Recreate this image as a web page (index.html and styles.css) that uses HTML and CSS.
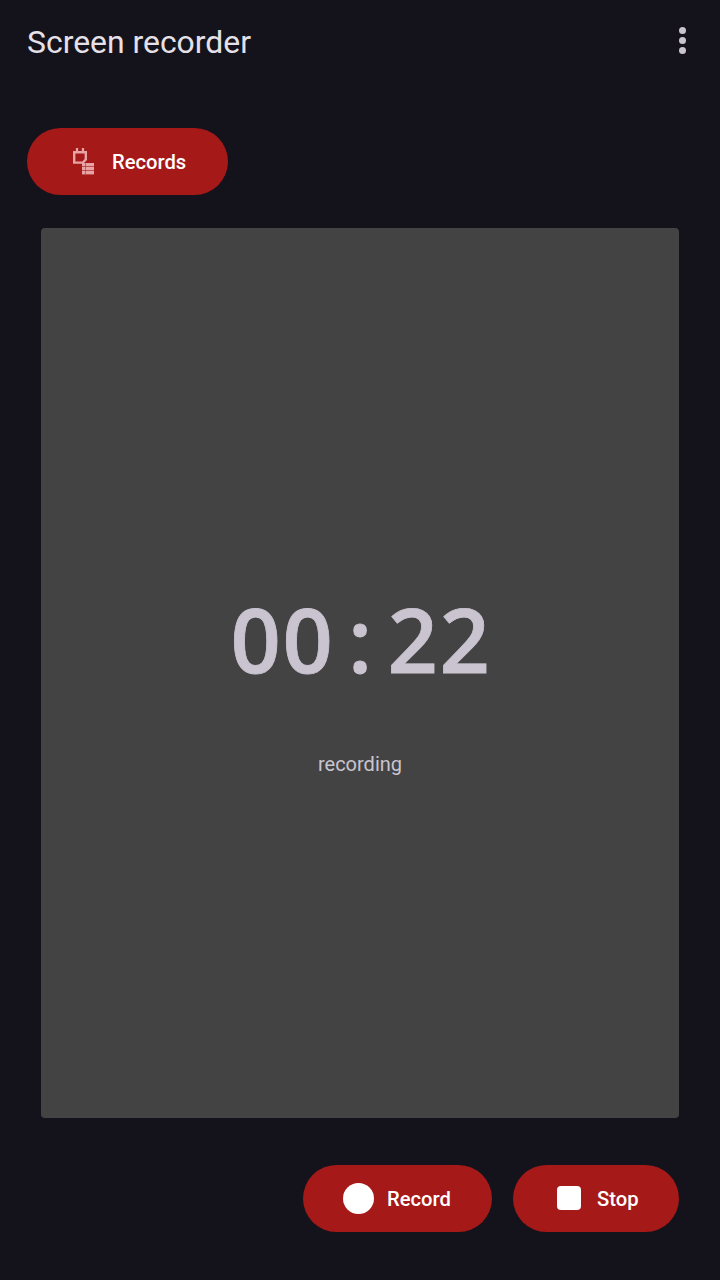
FILE: index.html
```html
<!DOCTYPE html>
<html lang="en">
<head>
<meta charset="utf-8">
<title>Screen recorder</title>
<link rel="stylesheet" href="styles.css">
</head>
<body>
<div class="app">
  <header class="appbar">
    <h1 class="title">Screen recorder</h1>
    <div class="more" aria-label="More options"><i></i><i></i><i></i></div>
  </header>
  <div class="top-actions">
    <button class="pill records">
      <svg class="rec-icon" width="24" height="28" viewBox="0 0 24 28">
        <path d="M2.2 5.2h11.6v7.4l-3 3H2.2z" fill="none" stroke="#e8a4a4" stroke-width="2.4"/>
        <path d="M5 1v4M11 1v4" fill="none" stroke="#e8a4a4" stroke-width="2.2"/>
        <g fill="#e8a4a4">
          <rect x="10" y="16" width="12" height="3.4"/>
          <rect x="10" y="20" width="12" height="3.4"/>
          <rect x="10" y="24" width="12" height="3.4"/>
        </g>
        <rect x="13" y="16" width="0.8" height="11.4" fill="#a51919" opacity="0.6"/>
      </svg>
      <span>Records</span>
    </button>
  </div>
  <main class="preview">
    <div class="timer">00 : 22</div>
    <div class="status">recording</div>
  </main>
  <div class="bottom-actions">
    <button class="pill record"><span class="dot"></span><span>Record</span></button>
    <button class="pill stop"><span class="square"></span><span>Stop</span></button>
  </div>
</div>
</body>
</html>
```
FILE: styles.css
```css
html, body {
  margin: 0;
  height: 100%;
  background: #14121a;
}
.app {
  display: flex;
  flex-direction: column;
  height: 1280px;
  box-sizing: border-box;
  font-family: Roboto, sans-serif;
}
.appbar {
  display: flex;
  align-items: center;
  justify-content: space-between;
  height: 83px;
  padding: 0 34.5px 0 27px;
}
.title {
  margin: 0;
  font-size: 31.9px;
  font-weight: 400;
  color: #e6e1e8;
}
.more {
  display: flex;
  flex-direction: column;
  gap: 3px;
  margin-top: -3px;
}
.more i {
  display: block;
  width: 7px;
  height: 7px;
  border-radius: 50%;
  background: #cac4d0;
}
.top-actions {
  padding: 45px 27px 0;
  display: flex;
}
.pill {
  display: flex;
  align-items: center;
  height: 66.5px;
  border: 0;
  border-radius: 34px;
  background: #a51919;
  color: #fff;
  font-family: Roboto, sans-serif;
  font-size: 20.2px;
  font-weight: 500;
  box-sizing: border-box;
  padding: 0;
}
.pill span:last-child {
  position: relative;
  top: 0.5px;
}
.records {
  width: 200.5px;
  padding-left: 45px;
  gap: 16px;
}
.preview {
  margin: 33.5px 41px 0;
  height: 890px;
  background: #434343;
  border-radius: 4px;
  display: flex;
  flex-direction: column;
  align-items: center;
  justify-content: center;
}
.timer {
  font-family: "Open Sans", sans-serif;
  font-weight: 600;
  font-size: 88px;
  letter-spacing: 1.7px;
  line-height: 100px;
  color: #cac4d0;
  -webkit-text-stroke: 0.8px #cac4d0;
  white-space: pre;
  word-spacing: -11px;
  margin-top: 20px;
  padding-left: 2px;
}
.status {
  font-size: 20px;
  line-height: 28px;
  color: #cac4d0;
  margin-top: 61px;
}
.bottom-actions {
  display: flex;
  justify-content: flex-end;
  gap: 21px;
  padding: 47px 41px 0;
}
.record {
  width: 189px;
  padding-left: 40px;
  gap: 13px;
}
.stop {
  width: 166px;
  padding-left: 44px;
  gap: 16px;
}
.dot {
  width: 31px;
  height: 31px;
  border-radius: 50%;
  background: #fff;
}
.square {
  width: 24px;
  height: 24px;
  border-radius: 4px;
  background: #fff;
  filter: blur(0.7px);
}
```
